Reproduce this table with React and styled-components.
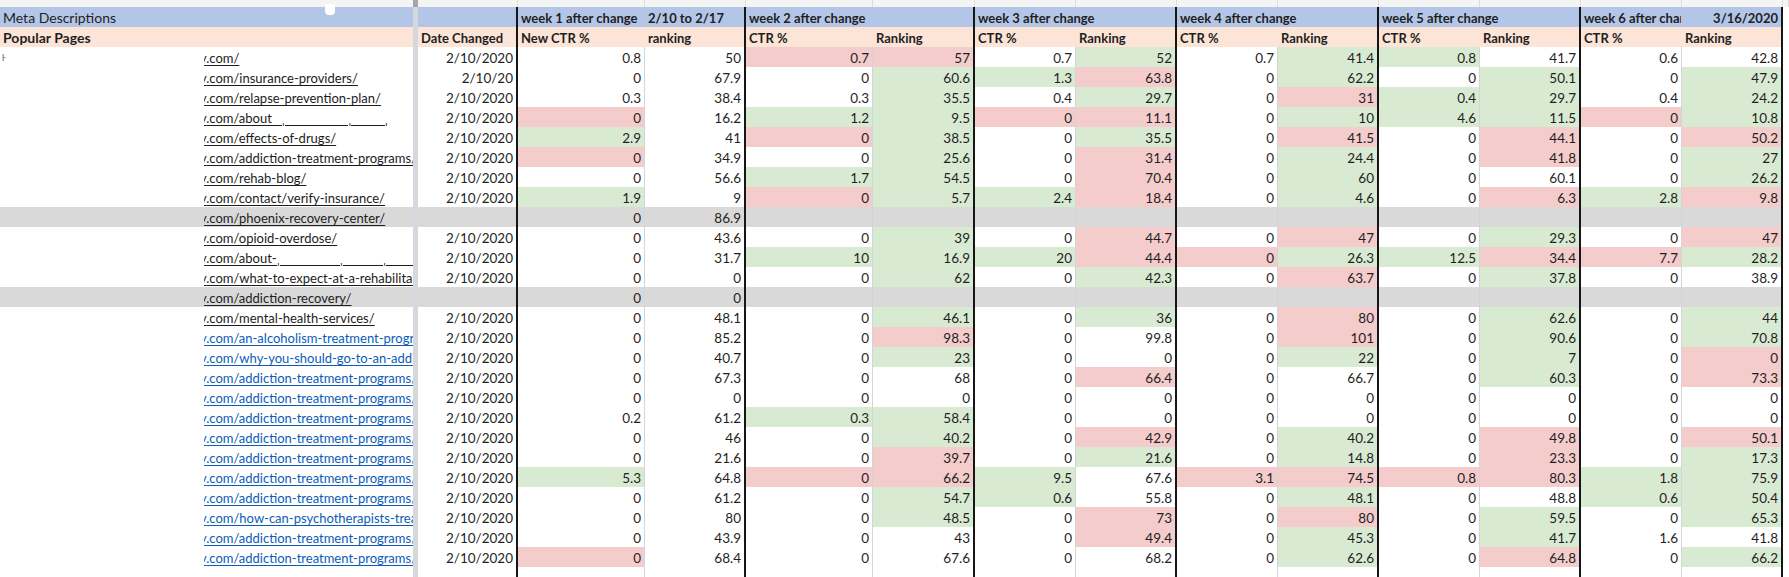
import React from "react";
import styled, { createGlobalStyle } from "styled-components";

const GlobalStyle = createGlobalStyle`
  html, body {
    margin: 0;
    padding: 0;
    background: #fff;
  }
  body {
    font-family: Lato, "Open Sans", "Liberation Sans", sans-serif;
    font-size: 13.5px;
    color: #1f1f1f;
  }
`;

const COLUMNS =
  "413px 5px 100px 127px 101px 127px 102px 101px 101px 101px 101px 101px 101px 101px 101px 6px";

const GRID = "#d4d4d4";
const FILLS = {
  g: "#d9ead3",
  r: "#f4cccc",
  grey: "#d9d9d9",
  blue: "#b4c6e7",
  peach: "#fce4d6",
};

const Sheet = styled.div`
  position: relative;
  width: 1789px;
  height: 577px;
  overflow: hidden;
  display: flex;
  flex-direction: column;
`;

const Row = styled.div`
  display: grid;
  grid-template-columns: ${COLUMNS};
  height: ${(p) => p.$h || 20}px;
  flex: none;
`;

const TopCell = styled.div`
  box-sizing: border-box;
  background: ${(p) => (p.$bar ? "#a3a6ab" : "#f4f4f4")};
  border-right: 1px solid ${(p) => (p.$bar || p.$first ? "transparent" : "#dcdcdc")};
`;

const Cell = styled.div`
  box-sizing: border-box;
  grid-column: ${(p) => (p.$span ? `span ${p.$span}` : "auto")};
  min-width: 0;
  height: 100%;
  padding: 2px 3px 0;
  line-height: 18px;
  white-space: nowrap;
  overflow: ${(p) => (p.$clip ? "hidden" : "visible")};
  text-align: ${(p) => (p.$right ? "right" : "left")};
  font-weight: ${(p) => (p.$bold ? 700 : 400)};
  font-size: ${(p) => (p.$bold ? "13px" : "inherit")};
  background: ${(p) => p.$fill || "#fff"};
  border-right: ${(p) =>
    p.$edge ? "2px solid #161616" : `1px solid ${p.$head ? p.$fill : GRID}`};
  border-bottom: 1px solid ${(p) => (p.$head ? p.$fill : GRID)};
`;

const PageCell = styled.div`
  box-sizing: border-box;
  display: flex;
  min-width: 0;
  height: 100%;
  padding-top: 2px;
  line-height: 18px;
  font-size: 13px;
  white-space: nowrap;
  overflow: hidden;
  background-color: ${(p) => p.$fill || "#fff"};
  background-image: linear-gradient(#c4c4c4, #c4c4c4);
  background-size: 4px 1px;
  background-position: left bottom;
  background-repeat: no-repeat;
`;

const HeadTitle = styled.div`
  box-sizing: border-box;
  height: 100%;
  padding: 2px 3px 0;
  line-height: 18px;
  font-size: 14px;
  white-space: nowrap;
  font-weight: ${(p) => (p.$bold ? 700 : 400)};
  background: ${(p) => p.$fill};
`;

const Lead = styled.span`
  flex: none;
  width: 204px;
  padding-left: 2px;
  box-sizing: border-box;
  font-size: 9px;
  color: #555;
`;

const Clip = styled.span`
  flex: 1;
  min-width: 0;
  overflow: hidden;
`;

const PageLink = styled.span`
  display: inline-block;
  margin-left: -4px;
  color: ${(p) => (p.$blue ? "#0b5cb8" : "#1c1c1c")};
  text-decoration: underline;
  text-decoration-thickness: 1px;
  text-underline-offset: 2px;
`;

const Divider = styled.div`
  background: #d5d9df;
`;

const Handle = styled.div`
  position: absolute;
  left: 325px;
  top: 4px;
  width: 10px;
  height: 11px;
  background: #fff;
  border-radius: 2px 2px 4px 4px;
`;

const EDGE = new Set([2, 4, 6, 8, 10, 12, 14]);

const nb = (n) => "\u00a0".repeat(n);

const rows = [
  { url: ".com/", v: "0.8 50 0.7 57 0.7 52 0.7 41.4 0.8 41.7 0.6 42.8", f: "--rr-g-gg---", mark: "\u0140" },
  { url: ".com/insurance-providers/", date: "2/10/20", v: "0 67.9 0 60.6 1.3 63.8 0 62.2 0 50.1 0 47.9", f: "---ggr-g-g-g" },
  { url: ".com/relapse-prevention-plan/", v: "0.3 38.4 0.3 35.5 0.4 29.7 0 31 0.4 29.7 0.4 24.2", f: "---g-g-rgg-g" },
  { url: `.com/about${nb(3)}\u02cc${nb(19)}\u02cc${nb(10)}\u02cc`, v: "0 16.2 1.2 9.5 0 11.1 0 10 4.6 11.5 0 10.8", f: "r-ggrr-gggrg" },
  { url: ".com/effects-of-drugs/", v: "2.9 41 0 38.5 0 35.5 0 41.5 0 44.1 0 50.2", f: "g-rg-g-r-r-r" },
  { url: ".com/addiction-treatment-programs/", v: "0 34.9 0 25.6 0 31.4 0 24.4 0 41.8 0 27", f: "r--g-r-g-r-g" },
  { url: ".com/rehab-blog/", v: "0 56.6 1.7 54.5 0 70.4 0 60 0 60.1 0 26.2", f: "--gg-r-g---g" },
  { url: ".com/contact/verify-insurance/", v: "1.9 9 0 5.7 2.4 18.4 0 4.6 0 6.3 2.8 9.8", f: "g-rggr-g-rgr" },
  { url: ".com/phoenix-recovery-center/", grey: true, v: "0 86.9" },
  { url: ".com/opioid-overdose/", v: "0 43.6 0 39 0 44.7 0 47 0 29.3 0 47", f: "---g-r-r-g-r" },
  { url: `.com/about-\u02cc${nb(18)}\u02cc${nb(12)}\u02cc${nb(18)}s`, v: "0 31.7 10 16.9 20 44.4 0 26.3 12.5 34.4 7.7 28.2", f: "--gggrrggrrg" },
  { url: ".com/what-to-expect-at-a-rehabilitation-center/", v: "0 0 0 62 0 42.3 0 63.7 0 37.8 0 38.9", f: "---g-g-r-g--" },
  { url: ".com/addiction-recovery/", grey: true, v: "0 0" },
  { url: ".com/mental-health-services/", v: "0 48.1 0 46.1 0 36 0 80 0 62.6 0 44", f: "---g-g-r-g-g" },
  { url: ".com/an-alcoholism-treatment-program/", blue: true, v: "0 85.2 0 98.3 0 99.8 0 101 0 90.6 0 70.8", f: "---r---r-g-g" },
  { url: ".com/why-you-should-go-to-an-addiction-treatment-center/", blue: true, v: "0 40.7 0 23 0 0 0 22 0 7 0 0", f: "---g---g-g-r" },
  { url: ".com/addiction-treatment-programs/detox/", blue: true, v: "0 67.3 0 68 0 66.4 0 66.7 0 60.3 0 73.3", f: "-----r---g-r" },
  { url: ".com/addiction-treatment-programs/residential/", blue: true, v: "0 0 0 0 0 0 0 0 0 0 0 0", f: "------------" },
  { url: ".com/addiction-treatment-programs/outpatient/", blue: true, v: "0.2 61.2 0.3 58.4 0 0 0 0 0 0 0 0", f: "--gg--------" },
  { url: ".com/addiction-treatment-programs/php/", blue: true, v: "0 46 0 40.2 0 42.9 0 40.2 0 49.8 0 50.1", f: "---g-r-g-r-r" },
  { url: ".com/addiction-treatment-programs/iop/", blue: true, v: "0 21.6 0 39.7 0 21.6 0 14.8 0 23.3 0 17.3", f: "---r-g-g-r-g" },
  { url: ".com/addiction-treatment-programs/sober-living/", blue: true, v: "5.3 64.8 0 66.2 9.5 67.6 3.1 74.5 0.8 80.3 1.8 75.9", f: "g-rrg-rrrrgg" },
  { url: ".com/addiction-treatment-programs/aftercare/", blue: true, v: "0 61.2 0 54.7 0.6 55.8 0 48.1 0 48.8 0.6 50.4", f: "---gg--g--gg" },
  { url: ".com/how-can-psychotherapists-treat-addiction/", blue: true, v: "0 80 0 48.5 0 73 0 80 0 59.5 0 65.3", f: "---g-r-r-g-g" },
  { url: ".com/addiction-treatment-programs/dual-diagnosis/", blue: true, v: "0 43.9 0 43 0 49.4 0 45.3 0 41.7 1.6 41.8", f: "-----r-g-g--" },
  { url: ".com/addiction-treatment-programs/family/", blue: true, v: "0 68.4 0 67.6 0 68.2 0 62.6 0 64.8 0 66.2", f: "r------g-r-g" },
];

const subTitles = ["New CTR %", "ranking", "CTR %", "Ranking", "CTR %", "Ranking", "CTR %", "Ranking", "CTR %", "Ranking", "CTR %", "Ranking"];

function TopStrip() {
  return (
    <Row $h={7}>
      <TopCell $first />
      <TopCell $bar />
      {Array.from({ length: 14 }).map((_, i) => (
        <TopCell key={i} />
      ))}
    </Row>
  );
}

function BlueHeader() {
  const fill = FILLS.blue;
  return (
    <Row>
      <HeadTitle $fill={fill}>Meta Descriptions</HeadTitle>
      <Divider />
      <Cell $head $edge $fill={fill} />
      <Cell $head $bold $fill={fill}>week 1 after change</Cell>
      <Cell $head $edge $bold $fill={fill}>2/10 to 2/17</Cell>
      {[2, 3, 4, 5].map((w) => (
        <Cell key={w} $head $edge $bold $span={2} $fill={fill}>
          week {w} after change
        </Cell>
      ))}
      <Cell $head $bold $clip $fill={fill}>week 6 after change</Cell>
      <Cell $head $edge $bold $right $fill={fill}>3/16/2020</Cell>
      <Cell />
    </Row>
  );
}

function PeachHeader() {
  const fill = FILLS.peach;
  return (
    <Row>
      <HeadTitle $fill={fill} $bold>Popular Pages</HeadTitle>
      <Divider />
      <Cell $head $edge $bold $fill={fill}>Date Changed</Cell>
      {subTitles.map((t, i) => (
        <Cell key={i} $head $bold $fill={fill} $edge={EDGE.has(i + 3)}>{t}</Cell>
      ))}
      <Cell />
    </Row>
  );
}

function DataRow({ row }) {
  const values = row.v.split(" ");
  const cells = Array.from({ length: 12 }, (_, i) => values[i] ?? "");
  const base = row.grey ? FILLS.grey : undefined;
  return (
    <Row>
      <PageCell $fill={base}>
        <Lead>{row.mark}</Lead>
        <Clip>
          <PageLink $blue={row.blue}>y{row.url}</PageLink>
        </Clip>
      </PageCell>
      <Divider />
      <Cell $right $edge $fill={base}>{row.grey ? "" : row.date || "2/10/2020"}</Cell>
      {cells.map((v, i) => (
        <Cell
          key={i}
          $right
          $edge={EDGE.has(i + 3)}
          $fill={base || FILLS[row.f?.[i]]}
        >
          {v}
        </Cell>
      ))}
      <Cell />
    </Row>
  );
}

function BlankRow() {
  return (
    <Row>
      <PageCell />
      <Divider />
      <Cell $edge />
      {Array.from({ length: 12 }).map((_, i) => (
        <Cell key={i} $edge={EDGE.has(i + 3)} />
      ))}
      <Cell />
    </Row>
  );
}

export default function App() {
  return (
    <>
      <GlobalStyle />
      <Sheet>
        <TopStrip />
        <BlueHeader />
        <PeachHeader />
        {rows.map((row, i) => (
          <DataRow key={i} row={row} />
        ))}
        <BlankRow />
        <Handle />
      </Sheet>
    </>
  );
}
